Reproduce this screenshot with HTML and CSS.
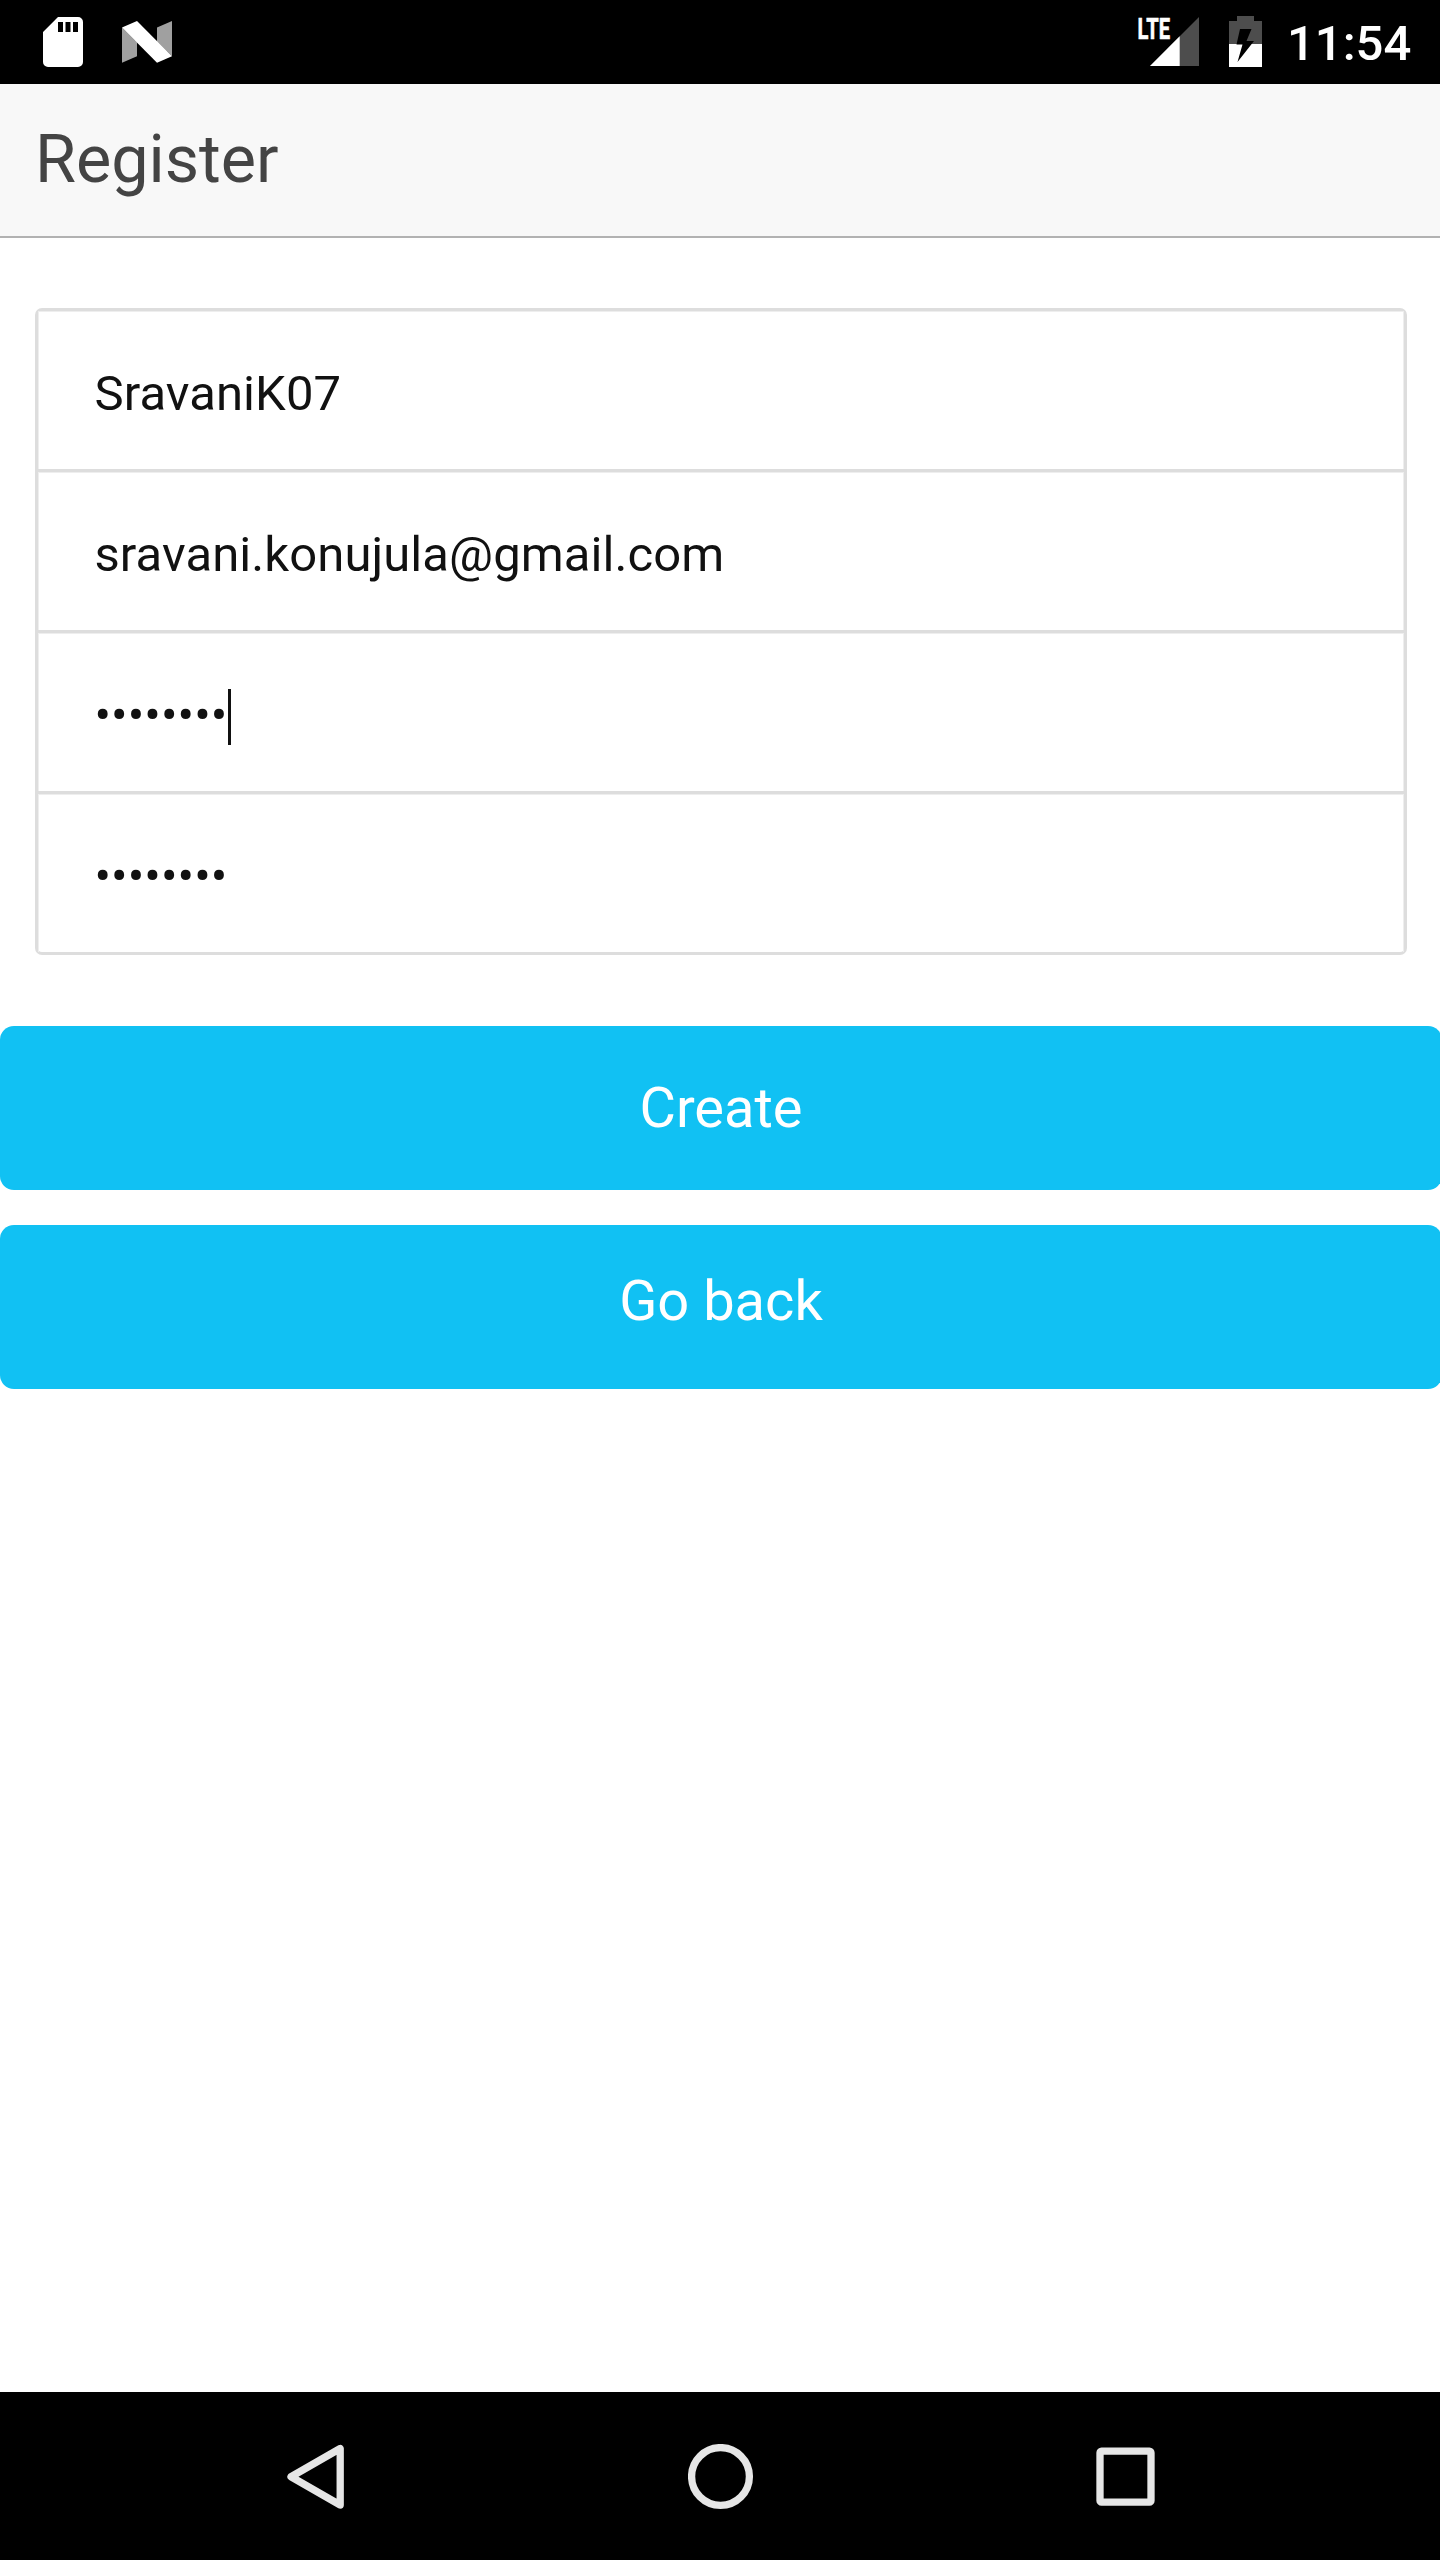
FILE: index.html
```html
<!DOCTYPE html>
<html lang="en">
<head>
<meta charset="utf-8">
<title>Register</title>
<link rel="stylesheet" href="styles.css">
</head>
<body>
<div class="screen">
  <div class="status-bar">
    <svg class="sd-icon" width="40" height="50" viewBox="0 0 40 50">
      <path fill="#fff" fill-rule="evenodd" d="M15 0H35a5 5 0 0 1 5 5V45a5 5 0 0 1-5 5H5a5 5 0 0 1-5-5V15ZM15 5v10h5V5ZM22.500 5v10h5V5ZM30 5v10h5V5Z"/>
    </svg>
    <svg class="n-icon" width="50" height="42" viewBox="0 0 50 42">
      <path fill="#a0a0a0" d="M0 6.500L15 21.500V35.300L0 41.700ZM35 6.500L50 0V35.300L35 20.500Z"/>
      <path fill="#fff" d="M0 6.500L15 0L50 35.300L35 41.700Z"/>
    </svg>
    <svg class="signal-icon" width="61" height="49" viewBox="0 0 61 49">
      <path fill="#4d4d4d" d="M12 49L61 0V49Z"/>
      <path fill="#fff" d="M12 49L41.700 19.300V49Z"/>
      <text class="lte" x="-0.500" y="21.600" textLength="32.500" lengthAdjust="spacingAndGlyphs">LTE</text>
    </svg>
    <svg class="battery-icon" width="33" height="51" viewBox="0 0 33 51">
      <path fill="#4d4d4d" d="M8 0H25V5H33V28H0V5H8Z"/>
      <path fill="#fff" d="M0 28H33V51H0Z"/>
      <path fill="#000" d="M11 13H22.500L17.500 25H25L8.500 46L13.500 28.500H7.500Z"/>
    </svg>
    <span class="clock">11:54</span>
  </div>
  <header class="title-bar"><h1>Register</h1></header>
  <main class="content">
    <div class="fields">
      <div class="field">SravaniK07</div>
      <div class="field">sravani.konujula@gmail.com</div>
      <div class="field">••••••••<span class="caret"></span></div>
      <div class="field">••••••••</div>
    </div>
    <div class="button create">Create</div>
    <div class="button back">Go back</div>
  </main>
  <nav class="nav-bar">
    <svg width="66" height="66" viewBox="0 0 66 66">
      <path d="M57.200 4.500V61L8 32.750Z"/>
    </svg>
    <svg width="66" height="66" viewBox="0 0 66 66">
      <circle cx="32.500" cy="32.500" r="28.900"/>
    </svg>
    <svg width="66" height="66" viewBox="0 0 66 66">
      <rect x="8" y="7.200" width="51" height="51" rx="1.500"/>
    </svg>
  </nav>
</div>
</body>
</html>
```

FILE: styles.css
```css
* { box-sizing: border-box; }
body {
  margin: 0;
  background: #fff;
  font-family: Roboto, sans-serif;
}
svg { display: block; flex: none; }
.screen {
  display: flex;
  flex-direction: column;
  width: 1440px;
  height: 2560px;
  overflow: hidden;
}
.status-bar {
  display: flex;
  align-items: flex-start;
  height: 84px;
  padding: 0 26px 0 43px;
  background: #000;
}
.sd-icon { margin-top: 17px; }
.n-icon { margin: 21px 0 0 39px; }
.signal-icon { margin: 17px 0 0 auto; overflow: visible; }
.lte {
  fill: #fff;
  stroke: #fff;
  stroke-width: 0.600;
  font: 700 29px Roboto, sans-serif;
}
.battery-icon { margin: 16px 25px 0 30px; }
.clock {
  width: 127px;
  color: #fff;
  font-size: 49px;
  font-weight: 500;
  line-height: 58px;
  padding-top: 15px;
  white-space: nowrap;
}
.title-bar {
  height: 154px;
  padding-left: 35px;
  background: #f8f8f8;
  border-bottom: 2px solid #b2b2b2;
}
.title-bar h1 {
  margin: 0;
  color: #444;
  font-size: 66.500px;
  font-weight: 400;
  line-height: 150px;
}
.content { flex: 1; padding-top: 70px; }
.fields {
  width: 1372px;
  height: 647px;
  margin-left: 35px;
  border: 3px solid #ddd;
  border-radius: 7px;
}
.field {
  display: flex;
  align-items: center;
  height: 161px;
  padding: 6px 0 0 56.500px;
  border-bottom: 3px solid #ddd;
  box-shadow: inset 1px 1px 0 #eee, inset -1px 0 0 #eee;
  color: #111;
  font-size: 49px;
  letter-spacing: 0.080px;
}
.field:last-child { height: 158px; border-bottom: 0; padding-top: 7px; }
.caret {
  width: 3.500px;
  height: 56px;
  margin: 4px 0 0 0.500px;
  background: #111;
}
.button {
  width: 1442px;
  border-radius: 14px;
  background: #11c1f3;
  color: #fff;
  font-size: 56px;
  text-align: center;
}
.create { height: 164px; margin-top: 71px; line-height: 164px; }
.back { height: 164px; margin-top: 35px; line-height: 152px; }
.nav-bar {
  display: flex;
  justify-content: space-between;
  height: 168px;
  padding: 52px 282px 0 283px;
  background: #000;
}
.nav-bar svg {
  fill: none;
  stroke: #e6e6e6;
  stroke-width: 7.300;
  stroke-linejoin: round;
}
```
